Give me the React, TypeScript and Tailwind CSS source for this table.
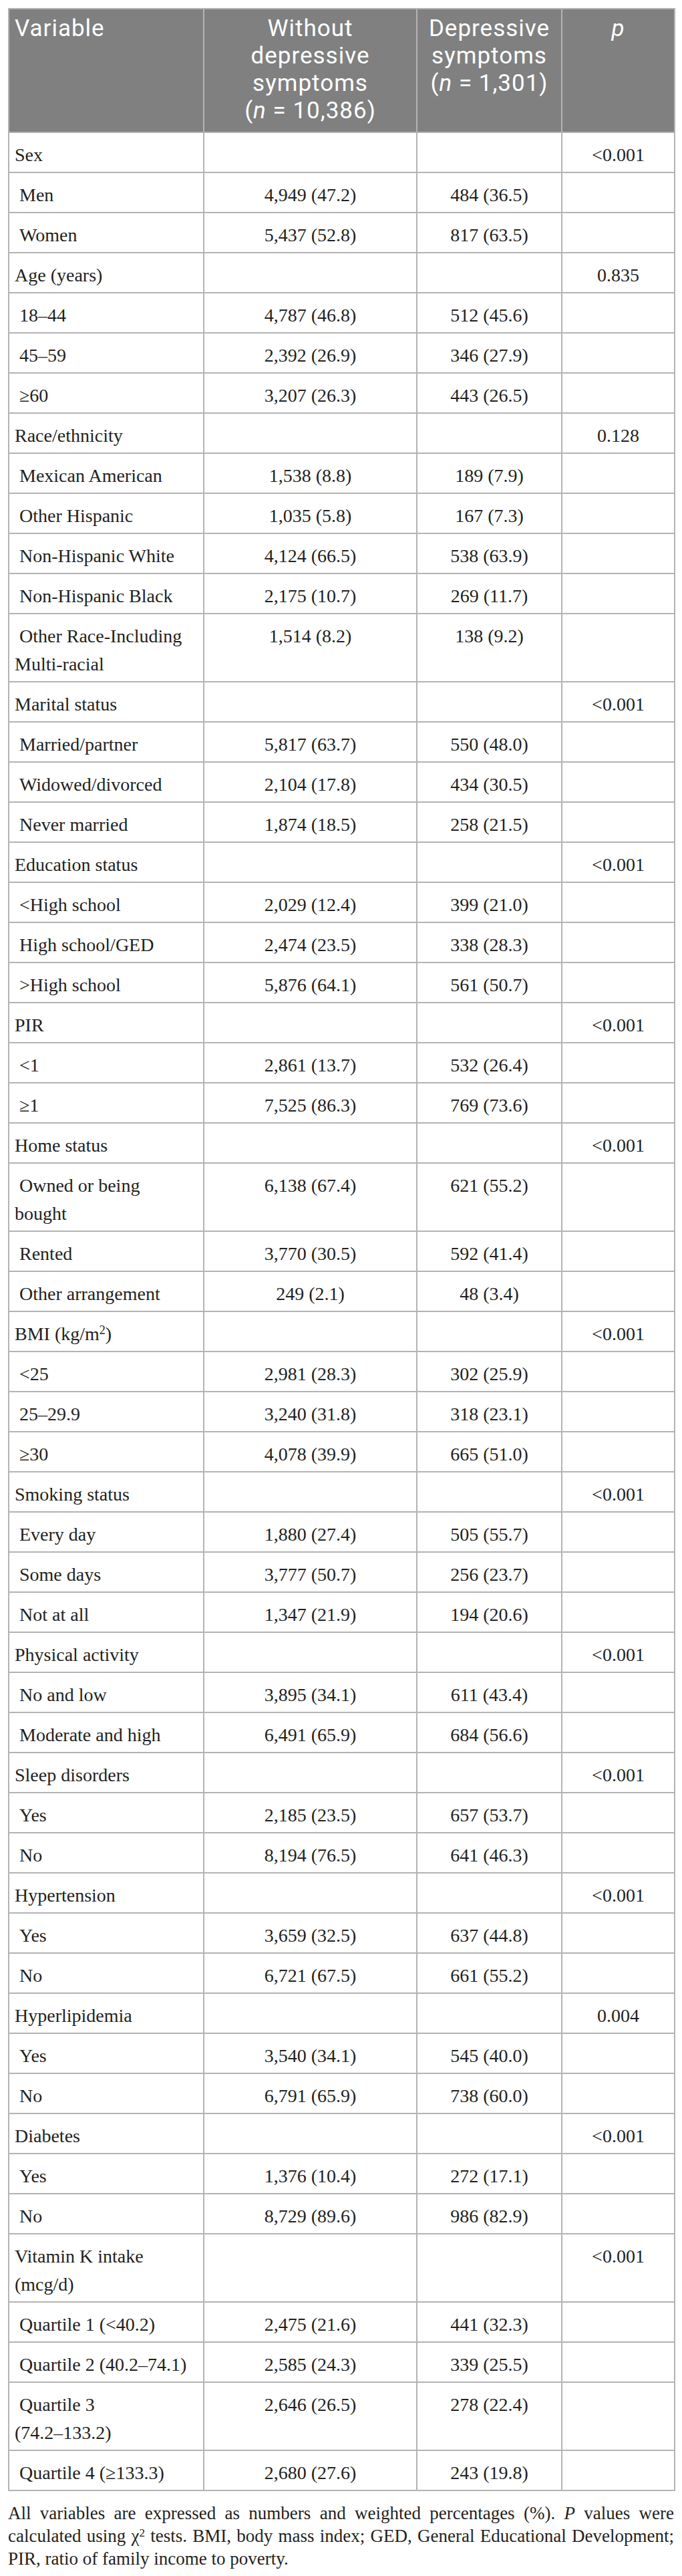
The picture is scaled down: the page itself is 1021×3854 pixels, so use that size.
import React from "react";

type Row =
  | { kind: "group"; label: string; p: string }
  | { kind: "item"; label: string; a: string; b: string };

const rows: Row[] = [
  { kind: "group", label: "Sex", p: "<0.001" },
  { kind: "item", label: "Men", a: "4,949 (47.2)", b: "484 (36.5)" },
  { kind: "item", label: "Women", a: "5,437 (52.8)", b: "817 (63.5)" },
  { kind: "group", label: "Age (years)", p: "0.835" },
  { kind: "item", label: "18–44", a: "4,787 (46.8)", b: "512 (45.6)" },
  { kind: "item", label: "45–59", a: "2,392 (26.9)", b: "346 (27.9)" },
  { kind: "item", label: "≥60", a: "3,207 (26.3)", b: "443 (26.5)" },
  { kind: "group", label: "Race/ethnicity", p: "0.128" },
  { kind: "item", label: "Mexican American", a: "1,538 (8.8)", b: "189 (7.9)" },
  { kind: "item", label: "Other Hispanic", a: "1,035 (5.8)", b: "167 (7.3)" },
  { kind: "item", label: "Non-Hispanic White", a: "4,124 (66.5)", b: "538 (63.9)" },
  { kind: "item", label: "Non-Hispanic Black", a: "2,175 (10.7)", b: "269 (11.7)" },
  { kind: "item", label: "Other Race-Including\nMulti-racial", a: "1,514 (8.2)", b: "138 (9.2)" },
  { kind: "group", label: "Marital status", p: "<0.001" },
  { kind: "item", label: "Married/partner", a: "5,817 (63.7)", b: "550 (48.0)" },
  { kind: "item", label: "Widowed/divorced", a: "2,104 (17.8)", b: "434 (30.5)" },
  { kind: "item", label: "Never married", a: "1,874 (18.5)", b: "258 (21.5)" },
  { kind: "group", label: "Education status", p: "<0.001" },
  { kind: "item", label: "<High school", a: "2,029 (12.4)", b: "399 (21.0)" },
  { kind: "item", label: "High school/GED", a: "2,474 (23.5)", b: "338 (28.3)" },
  { kind: "item", label: ">High school", a: "5,876 (64.1)", b: "561 (50.7)" },
  { kind: "group", label: "PIR", p: "<0.001" },
  { kind: "item", label: "<1", a: "2,861 (13.7)", b: "532 (26.4)" },
  { kind: "item", label: "≥1", a: "7,525 (86.3)", b: "769 (73.6)" },
  { kind: "group", label: "Home status", p: "<0.001" },
  { kind: "item", label: "Owned or being\nbought", a: "6,138 (67.4)", b: "621 (55.2)" },
  { kind: "item", label: "Rented", a: "3,770 (30.5)", b: "592 (41.4)" },
  { kind: "item", label: "Other arrangement", a: "249 (2.1)", b: "48 (3.4)" },
  { kind: "group", label: "BMI", p: "<0.001" },
  { kind: "item", label: "<25", a: "2,981 (28.3)", b: "302 (25.9)" },
  { kind: "item", label: "25–29.9", a: "3,240 (31.8)", b: "318 (23.1)" },
  { kind: "item", label: "≥30", a: "4,078 (39.9)", b: "665 (51.0)" },
  { kind: "group", label: "Smoking status", p: "<0.001" },
  { kind: "item", label: "Every day", a: "1,880 (27.4)", b: "505 (55.7)" },
  { kind: "item", label: "Some days", a: "3,777 (50.7)", b: "256 (23.7)" },
  { kind: "item", label: "Not at all", a: "1,347 (21.9)", b: "194 (20.6)" },
  { kind: "group", label: "Physical activity", p: "<0.001" },
  { kind: "item", label: "No and low", a: "3,895 (34.1)", b: "611 (43.4)" },
  { kind: "item", label: "Moderate and high", a: "6,491 (65.9)", b: "684 (56.6)" },
  { kind: "group", label: "Sleep disorders", p: "<0.001" },
  { kind: "item", label: "Yes", a: "2,185 (23.5)", b: "657 (53.7)" },
  { kind: "item", label: "No", a: "8,194 (76.5)", b: "641 (46.3)" },
  { kind: "group", label: "Hypertension", p: "<0.001" },
  { kind: "item", label: "Yes", a: "3,659 (32.5)", b: "637 (44.8)" },
  { kind: "item", label: "No", a: "6,721 (67.5)", b: "661 (55.2)" },
  { kind: "group", label: "Hyperlipidemia", p: "0.004" },
  { kind: "item", label: "Yes", a: "3,540 (34.1)", b: "545 (40.0)" },
  { kind: "item", label: "No", a: "6,791 (65.9)", b: "738 (60.0)" },
  { kind: "group", label: "Diabetes", p: "<0.001" },
  { kind: "item", label: "Yes", a: "1,376 (10.4)", b: "272 (17.1)" },
  { kind: "item", label: "No", a: "8,729 (89.6)", b: "986 (82.9)" },
  { kind: "group", label: "Vitamin K intake\n(mcg/d)", p: "<0.001" },
  { kind: "item", label: "Quartile 1 (<40.2)", a: "2,475 (21.6)", b: "441 (32.3)" },
  { kind: "item", label: "Quartile 2 (40.2–74.1)", a: "2,585 (24.3)", b: "339 (25.5)" },
  { kind: "item", label: "Quartile 3\n(74.2–133.2)", a: "2,646 (26.5)", b: "278 (22.4)" },
  { kind: "item", label: "Quartile 4 (≥133.3)", a: "2,680 (27.6)", b: "243 (19.8)" },
];

const th =
  "border-2 border-[#b3b3b3] bg-[#808080] text-white font-normal align-top pt-[8px] pb-[11px] px-[8px] leading-[41px]";
const td = "border-2 border-[#b3b3b3] align-top pt-[12px] pb-[4px] px-[8px] leading-[42px]";

function Label({ text, indent }: { text: string; indent: boolean }) {
  if (text === "BMI") {
    return (
      <>
        BMI (kg/m<sup className="text-[18px]">2</sup>)
      </>
    );
  }
  const lines = text.split("\n");
  return (
    <>
      {lines.map((line, i) => (
        <React.Fragment key={i}>
          {i === 0 && indent ? "\u00a0" : ""}
          {line}
          {i < lines.length - 1 && <br />}
        </React.Fragment>
      ))}
    </>
  );
}

export default function App() {
  return (
    <div className="bg-white px-[12px] pt-[12px] pb-[16px] text-[#231f20] font-['Liberation_Serif',serif]">
      <table className="w-[997px] table-fixed border-collapse text-[28px]">
        <colgroup>
          <col className="w-[292px]" />
          <col className="w-[319px]" />
          <col className="w-[217px]" />
          <col className="w-[169px]" />
        </colgroup>
        <thead className="font-['Roboto',sans-serif] text-[35px] tracking-[1px]">
          <tr>
            <th className={`${th} text-left`}>Variable</th>
            <th className={`${th} text-center`}>
              Without
              <br />
              depressive
              <br />
              symptoms
              <br />(<i>n</i> = 10,386)
            </th>
            <th className={`${th} text-center`}>
              Depressive
              <br />
              symptoms
              <br />(<i>n</i> = 1,301)
            </th>
            <th className={`${th} text-center`}>
              <i>p</i>
            </th>
          </tr>
        </thead>
        <tbody>
          {rows.map((r, i) =>
            r.kind === "group" ? (
              <tr key={i}>
                <td className={td}>
                  <Label text={r.label} indent={false} />
                </td>
                <td className={td}></td>
                <td className={td}></td>
                <td className={`${td} text-center`}>{r.p}</td>
              </tr>
            ) : (
              <tr key={i}>
                <td className={td}>
                  <Label text={r.label} indent={true} />
                </td>
                <td className={`${td} text-center`}>{r.a}</td>
                <td className={`${td} text-center`}>{r.b}</td>
                <td className={td}></td>
              </tr>
            )
          )}
        </tbody>
      </table>
      <div className="mt-[16px] text-[27px] leading-[34px]">
        <p className="text-justify [text-align-last:justify]">
          All variables are expressed as numbers and weighted percentages (%). <i>P</i> values were
        </p>
        <p className="text-justify [text-align-last:justify]">
          calculated using χ<sup className="text-[17px]">2</sup> tests. BMI, body mass index; GED, General Educational Development;
        </p>
        <p>PIR, ratio of family income to poverty.</p>
      </div>
    </div>
  );
}
